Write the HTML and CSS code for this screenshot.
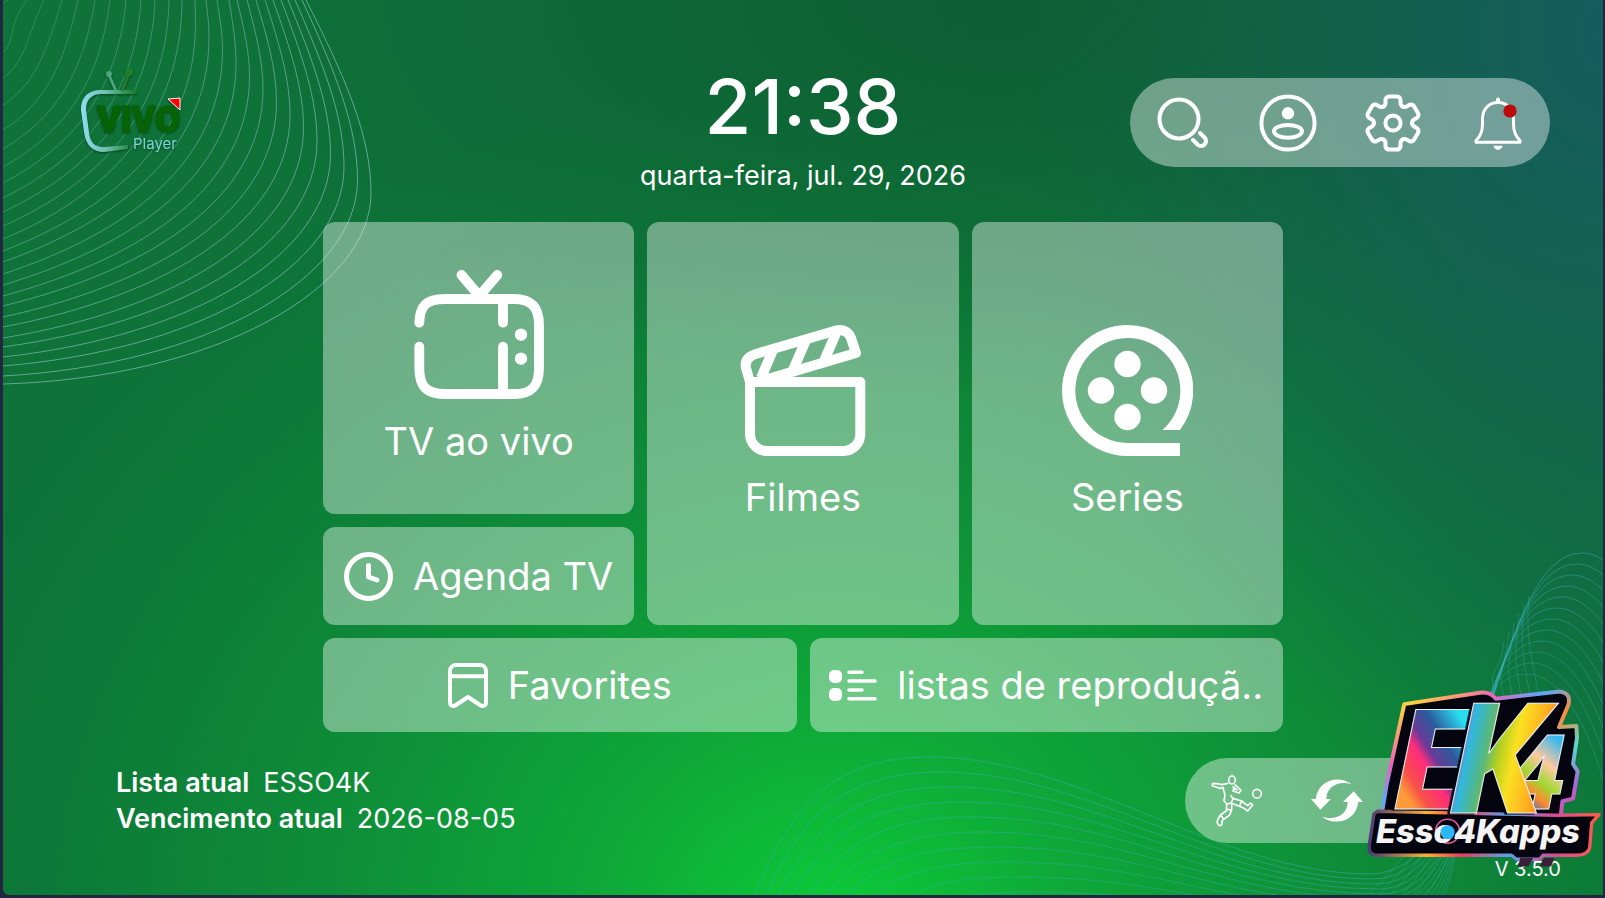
FILE: index.html
```html
<!DOCTYPE html>
<html lang="pt-BR">
<head>
  <meta charset="UTF-8" />
  <meta name="viewport" content="width=device-width, initial-scale=1.0"/>
  <title>Vivo Player</title>
  <link rel="stylesheet" href="styles.css">
</head>
<body>

  <div class="screen">
    <svg class="waves" viewBox="3 0 1600 895" preserveAspectRatio="none" aria-hidden="true">
      <g id="cornerLines" class="corner-lines"></g>
      <g id="bottomLines" class="bottom-lines"></g>
    </svg>

    <header class="top">
      <svg class="brand" viewBox="0 0 110 92" role="img" aria-label="Vivo Player">
        <defs>
          <linearGradient id="frame" x1="0" x2="1">
            <stop offset="0" stop-color="#8fdcf0"/>
            <stop offset="0.45" stop-color="#6fc0ae"/>
            <stop offset="1" stop-color="#107a20"/>
          </linearGradient>
        </defs>
        <path d="M59 24 H24 C9 24 3 32 3 44 L6 66 C8 80 15 86 26 86 L50 83 V79 L26 81 C17 81 12 77 11 66 L8 44 C8 34 13 28 24 28 H59 Z" fill="url(#frame)"/>
        <path d="M31 9 L38 25" stroke="#4aa67c" stroke-width="3"/>
        <path d="M51 7 L44 25" stroke="#23802f" stroke-width="3"/>
        <circle cx="31" cy="8" r="3" fill="#4aa67c"/>
        <circle cx="51" cy="6" r="4" fill="#1f7d2c"/>
        <text class="brand-name" x="19" y="66">VIVO</text>
        <path d="M90 33 L102 32 V44 Z" fill="#f00" stroke="#fff" stroke-width="1" stroke-linejoin="round"/>
        <text class="brand-sub" x="55" y="83">Player</text>
      </svg>

      <div class="clock">
        <div class="time">21:38</div>
        <div class="date">quarta-feira, jul. 29, 2026</div>
      </div>

      <nav class="pill">
        <button aria-label="Buscar">
          <svg width="58" height="58" viewBox="0 0 58 58" class="line">
            <circle cx="25" cy="25" r="19.500"/>
            <path d="M46 39 l5 5 a5 5 0 0 1 -7 7 l-5 -5"/>
          </svg>
        </button>
        <button aria-label="Conta">
          <svg width="58" height="58" viewBox="0 0 58 58" class="line">
            <circle cx="29" cy="29" r="26.600"/>
            <circle cx="29" cy="19.300" r="6.200" class="solid"/>
            <ellipse cx="29" cy="37.300" rx="14" ry="6.400"/>
          </svg>
        </button>
        <button aria-label="Configurações">
          <svg width="58" height="58" viewBox="-29 -29 58 58" class="line">
            <defs>
              <path id="tooth" d="M-9.500 -16.500 C-6 -18.500 -8 -22 -7.500 -23.500 C-7 -26 -6 -26.600 -3.500 -26.600 H3.500 C6 -26.600 7 -26 7.500 -23.500 C8 -22 6 -18.500 9.500 -16.500"/>
            </defs>
            <use href="#tooth"/>
            <use href="#tooth" transform="rotate(60)"/>
            <use href="#tooth" transform="rotate(120)"/>
            <use href="#tooth" transform="rotate(180)"/>
            <use href="#tooth" transform="rotate(240)"/>
            <use href="#tooth" transform="rotate(300)"/>
            <circle r="7.600"/>
          </svg>
        </button>
        <button aria-label="Notificações">
          <svg width="58" height="58" viewBox="-29 -29 58 58" class="line">
            <path d="M-22 19.300 H22 V17.500 C17 13 15.500 8 15.500 1 V-4 C15.500 -14 9 -20.500 0 -20.500 C-9 -20.500 -15.500 -14 -15.500 -4 V1 C-15.500 8 -17 13 -22 17.500 Z" stroke-width="3"/>
            <path d="M0 -23.500 V-21"/>
            <path class="solid" d="M-4.500 22.700 H4.500 A4.500 4 0 0 1 -4.500 22.700 Z"/>
            <circle class="alert" cx="12" cy="-12" r="6.600"/>
          </svg>
        </button>
      </nav>
    </header>

    <main class="menu">
      <div class="tiles">
        <button class="tile live">
          <svg width="130" height="130" viewBox="0 0 130 130" class="line" stroke-width="9.800">
            <path d="M47.500 5 L65.300 26 L83.300 5"/>
            <path d="M5.300 52.700 C6 36 12 29 31 29 H100 C118 29 125 38 125 55 V98 C125 116 118 124 100 124 H31 C12 124 5.300 116 5.300 98 V76.700"/>
            <path d="M89 29 V52.700 M89 76.700 V124"/>
            <circle class="solid" cx="107" cy="64.700" r="6.200"/>
            <circle class="solid" cx="107" cy="88.700" r="6.200"/>
          </svg>
          <span>TV ao vivo</span>
        </button>
        <button class="tile guide">
          <svg width="49" height="49" viewBox="0 0 49 49" class="line" stroke-width="5">
            <circle cx="24.500" cy="24.500" r="22"/>
            <path d="M24.500 13.500 V25 L33 28"/>
          </svg>
          <span>Agenda TV</span>
        </button>
        <button class="tile movies">
          <svg width="130" height="131" viewBox="0 0 130 131" class="line" stroke-width="10">
            <path d="M12 57 H122.300 V109 A17 17 0 0 1 105 126 H29 A17 17 0 0 1 12 109 Z"/>
            <path d="M12 57 L8 43 C6 34 13 30 21 28 L98 5.500 C107 3.500 112 8 114 16 L118 28 L20 57"/>
            <path stroke-width="10" stroke-linecap="butt" d="M35 25 L23 53 M68 15 L55 45 M99 6 L86 36"/>
          </svg>
          <span>Filmes</span>
        </button>
        <button class="tile series">
          <svg width="131" height="131" viewBox="0 0 131 131" fill="#fff">
            <path d="M65.500 0 A65.500 65.500 0 0 1 118 105 H100.400 A52.500 52.500 0 1 0 65.500 118 H118 V131 H65.500 A65.500 65.500 0 0 1 65.500 0 Z"/>
            <circle cx="65.500" cy="39" r="13.200"/>
            <circle cx="39" cy="65.500" r="13.200"/>
            <circle cx="92" cy="65.500" r="13.200"/>
            <circle cx="65.500" cy="92" r="13.200"/>
          </svg>
          <span>Series</span>
        </button>
      </div>
      <div class="shortcuts">
        <button class="tile">
          <svg width="40" height="45" viewBox="0 0 40 45" class="line" stroke-width="4">
            <path d="M8 2 H32 A6 6 0 0 1 38 8 V39 C38 43 35 44 32 42 L20 34 L8 42 C5 44 2 43 2 39 V8 A6 6 0 0 1 8 2 Z"/>
            <path d="M2 13.300 H38"/>
          </svg>
          <span>Favorites</span>
        </button>
        <button class="tile">
          <svg width="48" height="31" viewBox="0 0 48 31" class="line" stroke-width="3.500">
            <rect class="solid" width="13" height="13" rx="5"/>
            <rect class="solid" y="18" width="13" height="13" rx="5"/>
            <path d="M20 2.300 H33 M20 11 H46 M20 20 H33 M20 28.700 H46"/>
          </svg>
          <span>listas de reproduçã..</span>
        </button>
      </div>
    </main>

    <footer class="bottom">
      <dl class="account">
        <div><dt>Lista atual</dt><dd>ESSO4K</dd></div>
        <div><dt>Vencimento atual</dt><dd>2026-08-05</dd></div>
      </dl>
      <div class="tools">
        <div class="pill small">
          <button aria-label="Esportes">
            <svg width="52" height="52" viewBox="0 0 156 156" class="line">
              <ellipse cx="63" cy="15" rx="10" ry="12"/>
              <path d="M37 38 L26 40 L4 32 L4 26 L14 25 L32 29 L50 25 M36 38 L42 60 L39 78 L48 87 L60 84 L66 72 L60 62 M72 30 L80 36 L90 46 L84 54 L66 48 L68 42 L78 44 L66 36"/>
              <path d="M66 70 L92 78 L110 92 L119 84 L125 90 L110 108 L96 98 L62 85"/>
              <path d="M47 87 L46 108 L28 120 L22 130 L18 142 L24 152 L32 150 L34 136 L56 120 L62 104 L62 86 M46 102 L62 106 M28 120 L38 132 M92 79 L86 92"/>
              <circle cx="138" cy="56" r="13"/>
            </svg>
          </button>
          <button aria-label="Atualizar">
            <svg width="52" height="43" viewBox="0 0 156 129" fill="#fff">
              <path id="turn" d="M122 16 C88 -12 22 -2 14 60 H0 L28 92 L60 60 H46 C46 25 80 2 122 16 Z"/>
              <use href="#turn" transform="rotate(180 78 64.500)"/>
            </svg>
          </button>
        </div>
        <div class="version">V 3.5.0</div>
      </div>
    </footer>

    <svg class="sponsor" viewBox="15 10 712 540" role="img" aria-label="EK4 Esso4Kapps">
      <defs>
        <linearGradient id="edge" x1="0" y1="0" x2="1" y2="1">
          <stop offset="0" stop-color="#4fd0f0"/>
          <stop offset="0.12" stop-color="#ffd23c"/>
          <stop offset="0.3" stop-color="#f062b8"/>
          <stop offset="0.42" stop-color="#5aa8f8"/>
          <stop offset="0.55" stop-color="#ff8a3c"/>
          <stop offset="0.7" stop-color="#58d8d0"/>
          <stop offset="0.85" stop-color="#b060d8"/>
          <stop offset="1" stop-color="#ff4a66"/>
        </linearGradient>
        <linearGradient id="base" x1="0" x2="1">
          <stop offset="0" stop-color="#4a3a78"/>
          <stop offset="0.25" stop-color="#ffb030"/>
          <stop offset="0.4" stop-color="#f03a5a"/>
          <stop offset="0.6" stop-color="#5aa0e8"/>
          <stop offset="0.8" stop-color="#d84a9a"/>
          <stop offset="1" stop-color="#ff5a4a"/>
        </linearGradient>
        <linearGradient id="fillE" x1="0.7" y1="0.2" x2="0.3" y2="0.8">
          <stop offset="0" stop-color="#2adcf0"/>
          <stop offset="0.3" stop-color="#2c5a9c"/>
          <stop offset="0.5" stop-color="#6a3a98"/>
          <stop offset="0.62" stop-color="#ff2c7c"/>
          <stop offset="0.85" stop-color="#f8504a"/>
          <stop offset="1" stop-color="#ff9a3a"/>
        </linearGradient>
        <linearGradient id="fillK" x1="0" y1="0.2" x2="1" y2="0.6">
          <stop offset="0" stop-color="#f0603a"/>
          <stop offset="0.16" stop-color="#b060a0"/>
          <stop offset="0.26" stop-color="#30b8e0"/>
          <stop offset="0.4" stop-color="#5ab878"/>
          <stop offset="0.5" stop-color="#b4d020"/>
          <stop offset="0.62" stop-color="#fbe020"/>
          <stop offset="0.8" stop-color="#ffb020"/>
          <stop offset="1" stop-color="#ff5a30"/>
        </linearGradient>
        <linearGradient id="fill4" x1="0.6" y1="0.2" x2="0.4" y2="0.8">
          <stop offset="0" stop-color="#38b8f0"/>
          <stop offset="0.35" stop-color="#ffc8a0"/>
          <stop offset="0.6" stop-color="#a0d830"/>
          <stop offset="0.8" stop-color="#ff8a30"/>
          <stop offset="1" stop-color="#3a6ab8"/>
        </linearGradient>
      </defs>
      <path d="M133 58 L360 24 Q390 20 408 42 L600 20 Q635 25 626 60 L598 127 L650 124 L652 160 L640 238 L654 260 L640 342 L608 350 L604 386 L600 420 H60 L68 372 L80 300 Z" fill="#05050f" stroke="url(#edge)" stroke-width="12" stroke-linejoin="round"/>
      <path d="M52 380 L590 392 L718 390 L696 415 L690 490 Q684 512 650 512 L550 512 L540 524 L470 524 L455 512 H46 Q24 508 28 482 L42 388 Z" fill="#05050f" stroke="url(#base)" stroke-width="10" stroke-linejoin="round"/>
      <g class="big-letters">
        <text x="96" y="372" font-size="416" fill="url(#fillE)">E</text>
        <text x="442" y="372" font-size="310" fill="url(#fill4)">4</text>
        <text x="262" y="386" font-size="462" fill="url(#fillK)">K</text>
      </g>
      <path d="M50 388 L600 398 L680 400 L670 500 L50 500 Z" fill="#05050f"/>
      <path d="M482 520 L520 520 L506 546 L474 546 Z M552 520 L584 520 L574 546 L540 546 Z" fill="#38203a"/>
      <circle cx="263" cy="440" r="36" fill="none" stroke="#e85aa0" stroke-width="5"/>
      <text class="small-letters" x="48" y="474">Esso4Kapps</text>
      <circle cx="263" cy="443" r="21" fill="#28b8f8"/>
    </svg>
  </div>

  <script>
    function addLine(group, d, opacity) {
      const path = document.createElementNS('http://www.w3.org/2000/svg', 'path');
      path.setAttribute('d', d);
      path.setAttribute('opacity', opacity);
      document.getElementById(group).appendChild(path);
    }

    // where each corner line leaves the top edge and the left edge
    const topX = [306, 302, 295, 288, 281, 273, 265, 256, 247, 237, 229, 217, 206, 195, 182, 169, 155, 141, 126, 110, 95, 78, 62, 44, 27, 9];
    const leftY = [384, 376, 366, 357, 347, 338, 327, 317, 306, 296, 285, 274, 262, 251, 239, 226, 212, 198, 183, 167, 149, 130, 105, 78, 52, 18];

    topX.forEach((x, i) => {
      const y = leftY[i];
      let bx = x, by = 0, d = `M${x} 0`;
      if (i < 14) {
        bx = 371 - 13.5 * i;
        by = 193 - 13 * i;
        d += ` C${x + (bx - x) * 0.6} ${by * 0.4} ${bx} ${by * 0.7} ${bx} ${by}`;
      }
      const lean = i > 14 ? (i - 14) * 2 : 0;
      const slope = Math.min(0.03 + 0.028 * i, y / (bx * 0.55 + 1) * 0.45);
      d += ` C${bx - lean} ${by + (y - by) * 0.5} ${bx * 0.58} ${y - slope * bx * 0.55} 3 ${y}`;
      addLine('cornerLines', d, 0.55 - i * 0.014);
    });

    const startX = [755, 766, 778, 792, 808, 826, 847, 873, 911, 970, 1040, 1120];
    startX.forEach((x, i) => {
      const px = 930 + 11 * i, py = 757 + 15 * i;
      const rx = 1582 - 5 * i, ry = 553 + 11 * i;
      const ty = 874 + 5 * i;
      let d = `M${x} 896 C${x + (px - x) * 0.2} ${py + (896 - py) * 0.35} ${px - (px - x) * 0.55} ${py} ${px} ${py}`;
      d += ` C${px + 150} ${py} ${1220} ${ty} ${1370 + 3 * i} ${ty}`;
      d += ` C${1490} ${ty} ${rx - 90} ${ry} ${rx} ${ry}`;
      d += ` C${rx + 20} ${ry} ${rx + 60} ${ry + 20} ${rx + 90} ${ry + 160}`;
      addLine('bottomLines', d, 0.5 - i * 0.015);
    });

    // mesh behind the right crest
    for (let i = 0; i < 6; i++) {
      const y = 596 + 9 * i, x = 1529 - 5 * i;
      addLine('bottomLines', `M${x} ${y} C${x - 4} ${y + 40} ${1532 - 9 * i} 660 ${1540 - 9 * i} 700`, 0.35);
      addLine('bottomLines', `M${1365 + 12 * i} 896 C${1420 + 8 * i} 850 ${1450 + 5 * i} 790 1480 700`, 0.35);
    }
  </script>

</body>
</html>
```
FILE: styles.css
```css
* {
  box-sizing: border-box;
}
body {
  margin: 0;
  padding: 0 2px 3px 3px;
  background: #23263f;
  color: #fff;
  font-family: Inter, "Open Sans", sans-serif;
}
.screen {
  position: relative;
  display: flex;
  flex-direction: column;
  min-height: calc(100vh - 3px);
  overflow: hidden;
  border-radius: 0 0 0 6px;
  background:
    radial-gradient(ellipse 36% 90% at 100% 4%, #165c60 0%, rgba(20, 94, 84, 0.7) 40%, rgba(18, 100, 70, 0) 100%),
    radial-gradient(ellipse 50% 45% at 62% 0%, #0d5e33 0%, rgba(13, 94, 51, 0) 100%),
    radial-gradient(ellipse 60% 96% at 52% 104%, #0ccc38 0%, #0ea838 25%, #0e8e38 52%, #0d7938 82%, #0e7239 100%);
}
.waves {
  position: absolute;
  inset: 0;
  width: 100%;
  height: 100%;
  fill: none;
}
.corner-lines {
  stroke: #a8d4dc;
}
.bottom-lines {
  stroke: #3cacb8;
}
button {
  display: flex;
  align-items: center;
  justify-content: center;
  padding: 0;
  border: none;
  background: none;
  color: inherit;
  font: inherit;
  cursor: pointer;
}
.line {
  fill: none;
  stroke: #fff;
  stroke-linecap: round;
  stroke-linejoin: round;
}
.pill .line {
  stroke-width: 4px;
}
.line .solid {
  fill: #fff;
  stroke: none;
}
.line .alert {
  fill: #bd0a0a;
  stroke: none;
}

.top {
  position: relative;
  display: grid;
  grid-template-columns: 1fr auto 1fr;
  align-items: start;
  height: 222px;
  padding: 64px 53px 0;
}
.brand {
  width: 110px;
  height: 92px;
  margin: 2px 0 0 22px;
  filter: drop-shadow(0 1px 1px rgba(0, 40, 10, 0.6));
}
.brand-name {
  fill: #066306;
  stroke: #066306;
  font: 900 36px Roboto, sans-serif;
}
.brand-sub {
  fill: #7fd4d8;
  font: 15px Inter, sans-serif;
}
.clock {
  text-align: center;
}
.time {
  font-size: 76px;
  font-weight: 500;
  line-height: 84px;
}
.date {
  font-size: 27px;
  line-height: 56px;
}
.pill {
  display: grid;
  grid-template-columns: repeat(4, 1fr);
  justify-self: end;
  width: 420px;
  height: 89px;
  margin-top: 14px;
  border-radius: 45px;
  background: rgba(255, 255, 255, 0.4);
}

.menu {
  position: relative;
  display: flex;
  flex-direction: column;
  gap: 13px;
  width: 60%;
  margin: 0 auto;
  font-size: 38px;
  line-height: 57px;
}
.tiles {
  display: grid;
  grid-template-columns: repeat(3, 1fr);
  grid-template-rows: 292px 98px;
  gap: 13px;
}
.shortcuts {
  display: grid;
  grid-template-columns: repeat(2, 1fr);
  gap: 13px;
}
.tile {
  gap: 20px;
  min-height: 94px;
  border-radius: 12px;
  background: rgba(255, 255, 255, 0.4);
  white-space: nowrap;
}
.live,
.movies,
.series {
  flex-direction: column;
  gap: 13px;
  padding-top: 3px;
}
.movies,
.series {
  grid-row: 1 / 3;
}
.movies {
  grid-column: 2;
}
.series {
  grid-column: 3;
}
.guide {
  grid-row: 2;
}

.bottom {
  position: relative;
  display: flex;
  justify-content: space-between;
  padding: 26px 53px 0 113px;
}
.account {
  margin: 7px 0 0;
  font-size: 27px;
  line-height: 36px;
}
.account div {
  display: flex;
  gap: 14px;
}
.account dt {
  font-weight: 600;
}
.account dd {
  margin: 0;
}
.pill.small {
  grid-template-columns: 100px 100px;
  width: 365px;
  height: 85px;
  margin: 0;
  padding-left: 2px;
}
.pill.small .line {
  stroke-width: 5px;
}
.version {
  margin-right: -11px;
  padding-top: 11px;
  font-size: 20px;
  line-height: 30px;
  text-align: right;
}
.sponsor {
  position: absolute;
  right: 1px;
  bottom: 27px;
  width: 237px;
  height: 180px;
}
.big-letters {
  font-family: "Noto Sans", sans-serif;
  font-style: italic;
  font-weight: 800;
  stroke: #e8f0f8;
  stroke-width: 3px;
}
.big-letters text {
  filter: drop-shadow(-8px 3px 0 #05050f);
}
.small-letters {
  fill: #f4f4f4;
  font: italic 800 98px Inter, sans-serif;
}
```
